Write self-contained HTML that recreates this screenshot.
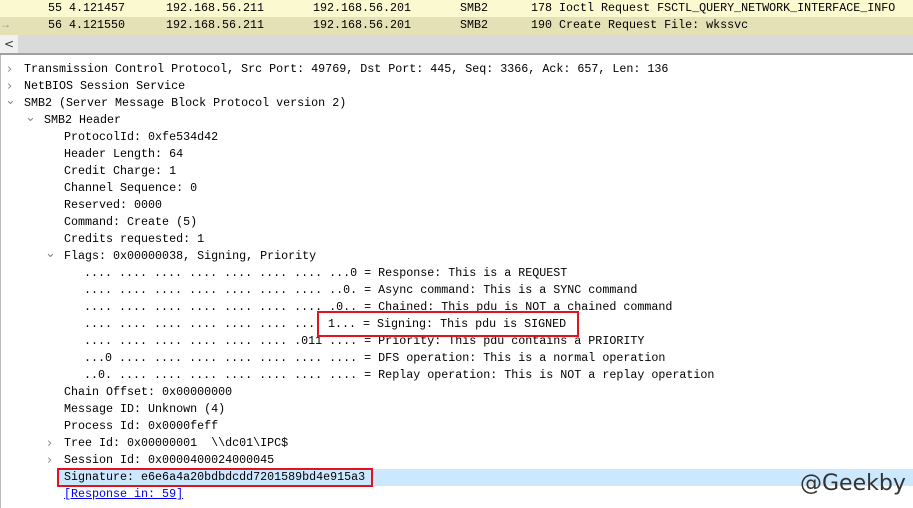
<!DOCTYPE html>
<html><head><meta charset="utf-8"><style>
*{margin:0;padding:0;box-sizing:border-box}
body{width:913px;height:508px;overflow:hidden;background:#fff;font-family:"Liberation Mono",monospace;font-size:11.68px;color:#000;position:relative}
.r{position:absolute;left:0;right:0;height:17px;line-height:17px;white-space:pre}
.c{position:absolute;top:0}
.l{position:absolute;height:17px;line-height:17px;white-space:pre;left:0;right:0}
.a{position:absolute;color:#888;font-family:"DejaVu Sans",sans-serif;font-size:13px}
</style></head><body>
<div class="r" style="top:0;background:#fbf9d0">
<span class="c" style="left:48px">55 4.121457</span><span class="c" style="left:166px">192.168.56.211</span><span class="c" style="left:313px">192.168.56.201</span><span class="c" style="left:460px">SMB2</span><span class="c" style="left:531px">178 Ioctl Request FSCTL_QUERY_NETWORK_INTERFACE_INFO</span></div>
<div class="r" style="top:17px;height:18px;background:#e4e1b6">
<span class="c" style="left:2px;color:#999">→</span><span class="c" style="left:48px">56 4.121550</span><span class="c" style="left:166px">192.168.56.211</span><span class="c" style="left:313px">192.168.56.201</span><span class="c" style="left:460px">SMB2</span><span class="c" style="left:531px">190 Create Request File: wkssvc</span></div>
<div style="position:absolute;top:35px;left:0;right:0;height:18px;background:#dadada"></div>
<div style="position:absolute;top:35px;left:0;width:18px;height:18px;background:#f0f0f0;font-family:'DejaVu Sans';font-size:12px;line-height:18px;text-align:center;color:#333">&lt;</div>
<div style="position:absolute;top:53px;left:0;right:0;height:2px;background:#a0a0a0"></div>
<div style="position:absolute;top:55px;left:0;width:1px;bottom:0;background:#bbb"></div>

<div class="l" style="top:469px;left:57px;background:#cce8ff"></div>

<div class="l" style="top:61px"><span class="a" style="left:7px">›</span><span class="c" style="left:24px">Transmission Control Protocol, Src Port: 49769, Dst Port: 445, Seq: 3366, Ack: 657, Len: 136</span></div>
<div class="l" style="top:78px"><span class="a" style="left:7px">›</span><span class="c" style="left:24px">NetBIOS Session Service</span></div>
<div class="l" style="top:95px"><span class="a" style="left:5px;top:-3px">⌄</span><span class="c" style="left:24px">SMB2 (Server Message Block Protocol version 2)</span></div>
<div class="l" style="top:112px"><span class="a" style="left:25px;top:-3px">⌄</span><span class="c" style="left:44px">SMB2 Header</span></div>
<div class="l" style="top:129px"><span class="c" style="left:64px">ProtocolId: 0xfe534d42</span></div>
<div class="l" style="top:146px"><span class="c" style="left:64px">Header Length: 64</span></div>
<div class="l" style="top:163px"><span class="c" style="left:64px">Credit Charge: 1</span></div>
<div class="l" style="top:180px"><span class="c" style="left:64px">Channel Sequence: 0</span></div>
<div class="l" style="top:197px"><span class="c" style="left:64px">Reserved: 0000</span></div>
<div class="l" style="top:214px"><span class="c" style="left:64px">Command: Create (5)</span></div>
<div class="l" style="top:231px"><span class="c" style="left:64px">Credits requested: 1</span></div>
<div class="l" style="top:248px"><span class="a" style="left:45px;top:-3px">⌄</span><span class="c" style="left:64px">Flags: 0x00000038, Signing, Priority</span></div>
<div class="l" style="top:265px"><span class="c" style="left:84px">.... .... .... .... .... .... .... ...0 = Response: This is a REQUEST</span></div>
<div class="l" style="top:282px"><span class="c" style="left:84px">.... .... .... .... .... .... .... ..0. = Async command: This is a SYNC command</span></div>
<div class="l" style="top:299px"><span class="c" style="left:84px">.... .... .... .... .... .... .... .0.. = Chained: This pdu is NOT a chained command</span></div>
<div class="l" style="top:316px"><span class="c" style="left:84px">.... .... .... .... .... .... .... 1... = Signing: This pdu is SIGNED</span></div>
<div class="l" style="top:333px"><span class="c" style="left:84px">.... .... .... .... .... .... .011 .... = Priority: This pdu contains a PRIORITY</span></div>
<div class="l" style="top:350px"><span class="c" style="left:84px">...0 .... .... .... .... .... .... .... = DFS operation: This is a normal operation</span></div>
<div class="l" style="top:367px"><span class="c" style="left:84px">..0. .... .... .... .... .... .... .... = Replay operation: This is NOT a replay operation</span></div>
<div class="l" style="top:384px"><span class="c" style="left:64px">Chain Offset: 0x00000000</span></div>
<div class="l" style="top:401px"><span class="c" style="left:64px">Message ID: Unknown (4)</span></div>
<div class="l" style="top:418px"><span class="c" style="left:64px">Process Id: 0x0000feff</span></div>
<div class="l" style="top:435px"><span class="a" style="left:47px">›</span><span class="c" style="left:64px">Tree Id: 0x00000001  \\dc01\IPC$</span></div>
<div class="l" style="top:452px"><span class="a" style="left:47px">›</span><span class="c" style="left:64px">Session Id: 0x0000400024000045</span></div>
<div class="l" style="top:469px"><span class="c" style="left:64px">Signature: e6e6a4a20bdbdcdd7201589bd4e915a3</span></div>
<div class="l" style="top:486px"><span class="c" style="left:64px;color:#0000ee;text-decoration:underline">[Response in: 59]</span></div>

<div style="position:absolute;left:317px;top:311px;width:262px;height:26px;border:2px solid #e0141e;background:#fff"></div>
<div class="l" style="top:316px"><span class="c" style="left:328px">1... = Signing: This pdu is SIGNED</span></div>
<div style="position:absolute;left:57px;top:468px;width:316px;height:19px;border:2px solid #e0141e"></div>

<div style="position:absolute;left:800px;top:468px;font-family:'DejaVu Sans',sans-serif;font-size:22px;color:#333;line-height:32px">@Geekby</div>
</body></html>
